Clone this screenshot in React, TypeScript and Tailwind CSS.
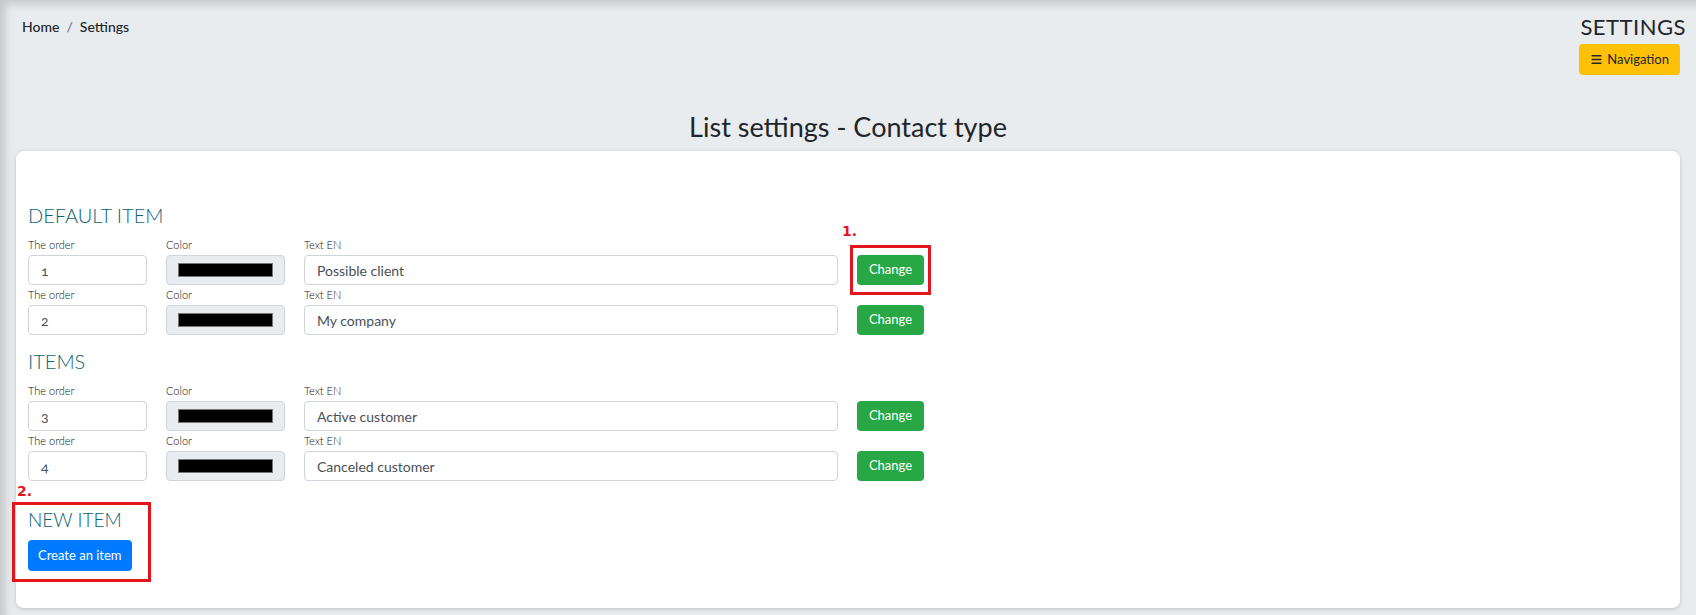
import { Menu } from "lucide-react";

const sections = [
  {
    title: "DEFAULT ITEM",
    items: [
      { order: "1", text: "Possible client" },
      { order: "2", text: "My company" },
    ],
  },
  {
    title: "ITEMS",
    items: [
      { order: "3", text: "Active customer" },
      { order: "4", text: "Canceled customer" },
    ],
  },
];

const Row = ({ order, text }: { order: string; text: string }) => (
  <div className="flex items-end gap-[19px]">
    <div className="flex w-[119px] flex-col">
      <span className="text-[11px] font-light leading-[20px] text-[#111]">The order</span>
      <input
        type="text"
        defaultValue={order}
        className="h-[30px] w-full rounded-[4px] border border-[#ced4da] bg-white px-3 text-[14px] text-[#495057] oldstyle-nums outline-none"
      />
    </div>
    <div className="flex w-[119px] flex-col">
      <span className="text-[11px] font-light leading-[20px] text-[#111]">Color</span>
      <div className="flex h-[30px] items-center rounded-[4px] border border-[#ced4da] bg-[#e9ecef] px-[11px]">
        <div className="h-[14px] w-full border border-[#767676] bg-black" />
      </div>
    </div>
    <div className="flex w-[534px] flex-col">
      <span className="text-[11px] font-light leading-[20px] text-[#111]">Text EN</span>
      <input
        type="text"
        defaultValue={text}
        className="h-[30px] w-full rounded-[4px] border border-[#ced4da] bg-white px-3 text-[14px] text-[#495057] outline-none"
      />
    </div>
    <button className="h-[30px] w-[67px] rounded-[4px] bg-[#28a745] text-[13px] text-white">
      Change
    </button>
  </div>
);

export default function App() {
  return (
    <div className="h-[615px] w-full overflow-hidden bg-[#e9ecef] font-['Lato',sans-serif] text-[#212529] shadow-[inset_8px_7px_10px_-3px_rgba(0,0,0,0.16)]">
      {/* header */}
      <div className="flex items-start justify-between pl-[22px] pr-[10px] pt-[14px]">
        <nav className="mt-[3px] flex items-center text-[14px] font-medium leading-[20px]">
          <span>Home</span>
          <span className="px-[7px] text-[#6c757d]">/</span>
          <span>Settings</span>
        </nav>
        <div className="flex flex-col items-end">
          <h1 className="text-[22px] leading-[26px] tracking-[0.5px]">SETTINGS</h1>
          <button className="mr-[6px] mt-[4px] flex h-[31px] items-center gap-[4px] rounded-[4px] bg-[#ffc107] px-[11px] text-[13px] text-[#212529]">
            <Menu size={13} strokeWidth={3} />
            Navigation
          </button>
        </div>
      </div>

      <h2 className="mt-[36px] text-center text-[27px] leading-[32px]">List settings - Contact type</h2>

      {/* card */}
      <div className="relative mx-[16px] mt-[8px] h-[457px] rounded-[8px] bg-white px-[12px] pt-[52px] shadow-[0_1px_4px_rgba(0,0,0,0.18)]">
        {sections.map((s, i) => (
          <div key={s.title} className={i > 0 ? "mt-[14px]" : ""}>
            <h5 className="mb-[8px] text-[20px] font-light leading-[24px] text-[#0b6272]">{s.title}</h5>
            {s.items.map((it) => (
              <Row key={it.order} order={it.order} text={it.text} />
            ))}
          </div>
        ))}

        <div className="mt-[27px]">
          <h5 className="mb-[8px] text-[19px] font-light leading-[24px] text-[#0b6272]">NEW ITEM</h5>
          <button className="h-[31px] rounded-[4px] bg-[#007bff] px-[10px] text-[13px] text-white">
            Create an item
          </button>
        </div>

        {/* annotations */}
        <span className="absolute left-[826px] top-[73px] font-['DejaVu_Sans',sans-serif] text-[14px] font-bold leading-none text-[#e3151c]">
          1.
        </span>
        <div className="absolute left-[834px] top-[94px] h-[50px] w-[81px] border-[3px] border-[#e3151c]" />
        <span className="absolute left-[1px] top-[333px] font-['DejaVu_Sans',sans-serif] text-[14px] font-bold leading-none text-[#e3151c]">
          2.
        </span>
        <div className="absolute -left-[4px] top-[351px] h-[80px] w-[139px] border-[3px] border-[#e3151c]" />
      </div>
    </div>
  );
}
